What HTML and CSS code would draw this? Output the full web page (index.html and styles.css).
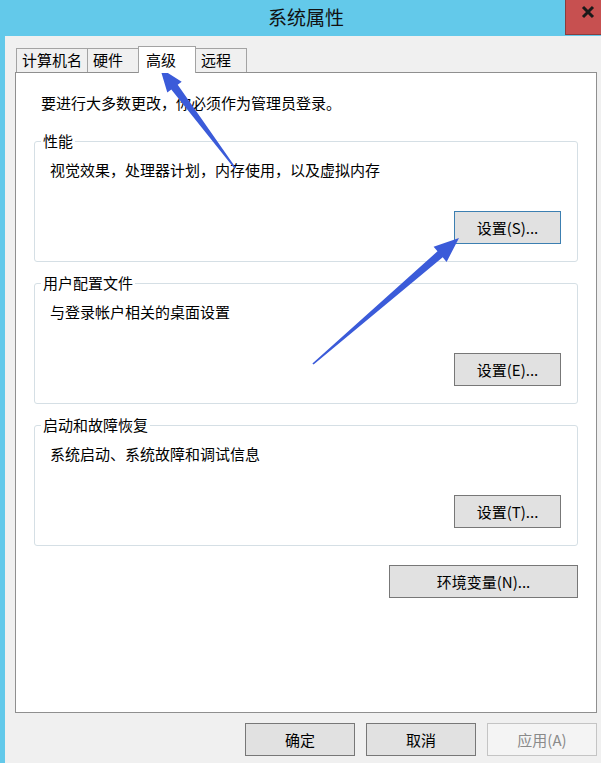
FILE: index.html
```html
<!DOCTYPE html>
<html lang="zh-CN">

<head>
    <meta charset="UTF-8">
    <title>系统属性</title>
    <link rel="stylesheet" href="styles.css">
</head>

<body>
    <div class="window">
        <!--title bar-->
        <div class="titlebar">
            <div class="title">系统属性</div>
            <div class="close-btn">
                <svg class="close-icon" width="14" height="14" viewBox="0 0 14 14">
                    <path d="M2 2 L12 12 M12 2 L2 12" stroke="#1a1a1a" stroke-width="3" />
                </svg>
            </div>
        </div>

        <div class="dialog">
            <!--tabs-->
            <div class="tabs">
                <div class="tab">计算机名</div>
                <div class="tab">硬件</div>
                <div class="tab tab-active">高级</div>
                <div class="tab">远程</div>
            </div>

            <div class="panel">
                <p class="intro">要进行大多数更改，你必须作为管理员登录。</p>

                <div class="group">
                    <span class="group-title">性能</span>
                    <p class="group-desc">视觉效果，处理器计划，内存使用，以及虚拟内存</p>
                    <button class="btn btn-small btn-default">设置(S)...</button>
                </div>

                <div class="group">
                    <span class="group-title">用户配置文件</span>
                    <p class="group-desc">与登录帐户相关的桌面设置</p>
                    <button class="btn btn-small">设置(E)...</button>
                </div>

                <div class="group">
                    <span class="group-title">启动和故障恢复</span>
                    <p class="group-desc">系统启动、系统故障和调试信息</p>
                    <button class="btn btn-small">设置(T)...</button>
                </div>

                <button class="btn btn-env">环境变量(N)...</button>
            </div>

            <div class="footer">
                <button class="btn btn-footer">确定</button>
                <button class="btn btn-footer">取消</button>
                <button class="btn btn-footer btn-disabled">应用(A)</button>
            </div>
        </div>
    </div>

    <!--annotation arrows-->
    <svg class="arrows" width="601" height="763" viewBox="0 0 601 763">
        <polygon fill="#3b5bd9"
            points="160,68 181.7,81.8 177.7,84.8 235.6,167.6 234.4,168.4 171.3,89.6 167.3,92.6" />
        <polygon fill="#3b5bd9"
            points="459,238 446.6,261.9 442.7,257.3 313.6,364.6 312.4,363.4 437.5,251.3 433.6,246.7" />
    </svg>
</body>

</html>
```

FILE: styles.css
```css
body {
    margin: 0;
    font-family: "Noto Sans CJK SC", "Liberation Sans", sans-serif;
    font-size: 15px;
    color: #000;
}

.window {
    width: 601px;
    height: 763px;
    display: flex;
    flex-direction: column;
    background: #63c9ea;
    overflow: hidden;
}

/* title bar */
.titlebar {
    height: 36px;
    display: flex;
    flex-shrink: 0;
}

.title {
    flex: 1;
    padding-left: 47px;
    text-align: center;
    font-size: 19px;
    line-height: 34px;
    color: #111;
}

.close-btn {
    width: 36px;
    height: 35px;
    box-sizing: border-box;
    background: #c75050;
    border-left: 1px solid #8a3c3c;
    border-bottom: 1px solid #8a3c3c;
    padding: 5px 0 0 15px;
}

.close-icon {
    display: block;
}

/* dialog body */
.dialog {
    flex: 1;
    margin-left: 5px;
    background: #f0f0f0;
    padding: 10px 4px 7px 10px;
    display: flex;
    flex-direction: column;
}

.tabs {
    display: flex;
    align-items: flex-end;
    padding-left: 1px;
}

.tab {
    height: 24px;
    box-sizing: border-box;
    min-width: 52px;
    padding: 0 5px;
    border: 1px solid #a3a3a3;
    border-bottom: none;
    margin-right: -1px;
    line-height: 22px;
    background: #f0f0f0;
}

.tab-active {
    position: relative;
    z-index: 1;
    height: 27px;
    min-width: 58px;
    padding: 2px 7px 0 7px;
    margin-bottom: -1px;
    background: #fff;
}

.panel {
    flex: 1;
    background: #fff;
    border: 1px solid #8f8f8f;
    padding: 20px 18px 0 18px;
    display: flex;
    flex-direction: column;
}

p {
    margin: 0;
    line-height: 20px;
}

.intro {
    margin-left: 7px;
    margin-bottom: 28px;
}

.group {
    position: relative;
    height: 121px;
    box-sizing: border-box;
    border: 1px solid #d5dfe5;
    border-radius: 3px;
    padding: 18px 16px 17px 15px;
    margin-bottom: 21px;
    display: flex;
    flex-direction: column;
}

.group-title {
    position: absolute;
    top: -11px;
    left: 6px;
    padding: 0 2px;
    line-height: 20px;
    background: #fff;
}

.group-desc {
    flex: 1;
}

.btn {
    font-family: inherit;
    font-size: 15px;
    color: #000;
    background: #e1e1e1;
    border: 1px solid #777;
    height: 33px;
    padding: 0;
    box-sizing: border-box;
}

.btn-small {
    width: 107px;
    align-self: flex-end;
}

.btn-default {
    border-color: #3c7fb1;
}

.btn-env {
    width: 189px;
    align-self: flex-end;
    margin-top: -2px;
}

.footer {
    display: flex;
    justify-content: flex-end;
    gap: 11px;
    margin-top: 10px;
}

.btn-footer {
    width: 110px;
}

.btn-disabled {
    background: #f4f4f4;
    border-color: #c4c4c4;
    color: #8a8a8a;
}

.arrows {
    position: absolute;
    top: 0;
    left: 0;
    pointer-events: none;
}
```
